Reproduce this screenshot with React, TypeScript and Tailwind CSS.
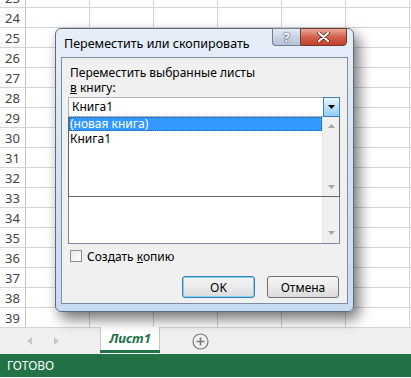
import React from "react";

const rows = Array.from({ length: 17 }, (_, i) => 23 + i);
const cols = [0, 1, 2, 3, 4, 5];

function DownTri({ className = "" }: { className?: string }) {
  return (
    <svg width="7" height="4" viewBox="0 0 7 4" className={className}>
      <path d="M0 0 H7 L3.5 4 Z" fill="currentColor" />
    </svg>
  );
}
function UpTri({ className = "" }: { className?: string }) {
  return (
    <svg width="7" height="4" viewBox="0 0 7 4" className={className}>
      <path d="M0 4 H7 L3.5 0 Z" fill="currentColor" />
    </svg>
  );
}

export default function App() {
  return (
    <div
      className="relative w-[411px] h-[378px] overflow-hidden bg-white"
      style={{ fontFamily: '"Noto Sans", "Open Sans", sans-serif' }}
    >
      {/* Grid */}
      <div className="flex flex-col mt-[-12px]">
        {rows.map((r) => (
          <div key={r} className="flex h-[20px] border-b border-[#d4d4d4] shrink-0">
            <div className="w-[26px] shrink-0 border-r border-[#c6c6c6] bg-white flex items-center justify-center text-[13px] leading-[16px] text-[#444]">
              {r}
            </div>
            {cols.map((c) => (
              <div key={c} className="w-[64px] shrink-0 border-r border-[#d4d4d4]" />
            ))}
          </div>
        ))}
      </div>

      {/* Sheet tab bar */}
      <div className="h-[27px] bg-[#f0f0f0] flex items-stretch border-t border-[#d4d4d4] mt-[-1px] relative">
        <div className="w-[100px] flex items-center">
          <div className="ml-[27px] text-[#c8c8c8]">
            <svg width="5" height="8" viewBox="0 0 5 8"><path d="M5 0 V8 L0 4 Z" fill="currentColor" /></svg>
          </div>
          <div className="ml-[22px] text-[#c8c8c8]">
            <svg width="5" height="8" viewBox="0 0 5 8"><path d="M0 0 V8 L5 4 Z" fill="currentColor" /></svg>
          </div>
        </div>
        <div className="w-[60px] bg-white border-x border-[#c6c6c6] mt-[-1px] flex flex-col">
          <div className="flex-1 flex items-center justify-center text-[13px] font-bold italic text-[#217346]">
            Лист1
          </div>
          <div className="h-[3px] mb-[1px] bg-[#217346] mx-[-1px]" />
        </div>
        <div className="ml-[32px] flex items-center">
          <svg width="17" height="17" viewBox="0 0 17 17">
            <circle cx="8.5" cy="8.5" r="7.5" fill="none" stroke="#7a7a7a" strokeWidth="1.2" />
            <path d="M8.5 4.5 V12.5 M4.5 8.5 H12.5" stroke="#7a7a7a" strokeWidth="1.6" />
          </svg>
        </div>
      </div>

      {/* Status bar */}
      <div className="h-[23px] bg-[#217346] flex items-center px-[7px] text-[12px] text-white">
        ГОТОВО
      </div>

      {/* Dialog */}
      <div
        className="absolute left-[55px] top-[28px] w-[299px] h-[284px] rounded-[6px] border border-[#5b6c80] bg-gradient-to-b from-[#e6eef8] via-[#d4e3f4] to-[#c8dcf1] shadow-[5px_7px_14px_rgba(0,0,0,0.55)] flex flex-col text-[12px] text-black"
      >
        {/* Title bar */}
        <div className="h-[28px] flex items-start shrink-0 relative">
          <div className="pl-[8px] pt-[6px] text-[12.5px] leading-[17px] text-black">Переместить или скопировать</div>
          <div className="absolute right-[6px] top-[-1px] flex">
            <div className="w-[28px] h-[18px] rounded-bl-[4px] border border-[#6f7f92] border-r-0 bg-gradient-to-b from-[#e4ebf3] via-[#c9d5e2] to-[#b3c3d6] flex items-center justify-center text-[13px] leading-[16px] font-bold text-white [text-shadow:0_0_1px_#2c3a4c,0_0_2px_#2c3a4c]">
              ?
            </div>
            <div className="w-[47px] h-[18px] rounded-br-[4px] border border-[#6f3a32] bg-gradient-to-b from-[#e9a99b] via-[#d3614c] to-[#c43f2b] flex items-center justify-center">
              <svg width="13" height="10" viewBox="0 0 13 10">
                <path d="M2 1 L11 9 M11 1 L2 9" stroke="#4a2620" strokeWidth="3.4" strokeLinecap="round" />
                <path d="M2 1 L11 9 M11 1 L2 9" stroke="#ffffff" strokeWidth="2" strokeLinecap="round" />
              </svg>
            </div>
          </div>
        </div>

        {/* Client area */}
        <div className="mx-[5px] h-[247px] border border-[#7d8c9e] bg-[#f0f0f0] relative flex flex-col px-[6px]">
          <div className="mt-[7px] leading-[15px] pl-[2px]">Переместить выбранные листы</div>
          <div className="leading-[15px] pl-[2px]">
            <span className="underline">в</span> книгу:
          </div>

          {/* Combo box */}
          <div className="mt-[2px] h-[20px] w-[272px] bg-white border border-[#a8b2bd] flex items-center relative">
            <div className="pl-[3px] flex-1 leading-[16px]">Книга1</div>
            <div className="w-[17px] h-[20px] mr-[-1px] border border-[#3c7fb1] bg-gradient-to-b from-[#e8f5fc] via-[#bde3f7] to-[#8dcdf0] flex items-center justify-center">
              <DownTri className="text-black" />
            </div>
          </div>

          {/* Underlying list box */}
          <div className="h-[127px] w-[272px] bg-white border border-[#828790] border-t-0 flex">
            <div className="flex-1" />
            <div className="w-[17px] bg-[#f0f0f0] border-l border-[#e6e6e6] flex flex-col justify-end items-center pb-[8px]">
              <DownTri className="text-[#a6a6a6]" />
            </div>
          </div>

          {/* Checkbox */}
          <div className="mt-[4px] flex items-center h-[16px]">
            <div className="ml-[2px] w-[12px] h-[12px] border border-[#8e8f8f] bg-gradient-to-br from-[#e6e6e6] to-[#ffffff]" />
            <div className="ml-[5px] leading-[15px]">
              Создать <span className="underline">к</span>опию
            </div>
          </div>

          {/* Buttons */}
          <div className="mt-[12px] flex justify-end gap-[12px] pr-[2px]">
            <div className="w-[73px] h-[22px] rounded-[3px] border border-[#3c7fb1] shadow-[inset_0_0_0_1px_#7ed2f6] bg-gradient-to-b from-[#f4f4f4] via-[#ebebeb] to-[#dcdcdc] flex items-center justify-center leading-[15px]">
              OK
            </div>
            <div className="w-[72px] h-[22px] rounded-[3px] border border-[#707070] bg-gradient-to-b from-[#f4f4f4] via-[#ebebeb] to-[#dcdcdc] flex items-center justify-center leading-[15px]">
              Отмена
            </div>
          </div>

          {/* Dropped-down list */}
          <div className="absolute left-[6px] top-[59px] w-[272px] h-[80px] bg-white border border-[#646464] border-t-0 flex">
            <div className="flex-1 flex flex-col">
              <div className="h-[14px] bg-[#3399ff] text-white leading-[14px] pl-[1px] outline-1 outline-dotted outline-offset-[-1px] outline-[#1a5fa8]">
                (новая книга)
              </div>
              <div className="h-[15px] leading-[15px] pl-[1px]">Книга1</div>
            </div>
            <div className="w-[17px] bg-[#f0f0f0] border-l border-[#e6e6e6] flex flex-col justify-between items-center py-[7px]">
              <UpTri className="text-[#a6a6a6]" />
              <DownTri className="text-[#a6a6a6]" />
            </div>
          </div>
        </div>
      </div>
    </div>
  );
}
